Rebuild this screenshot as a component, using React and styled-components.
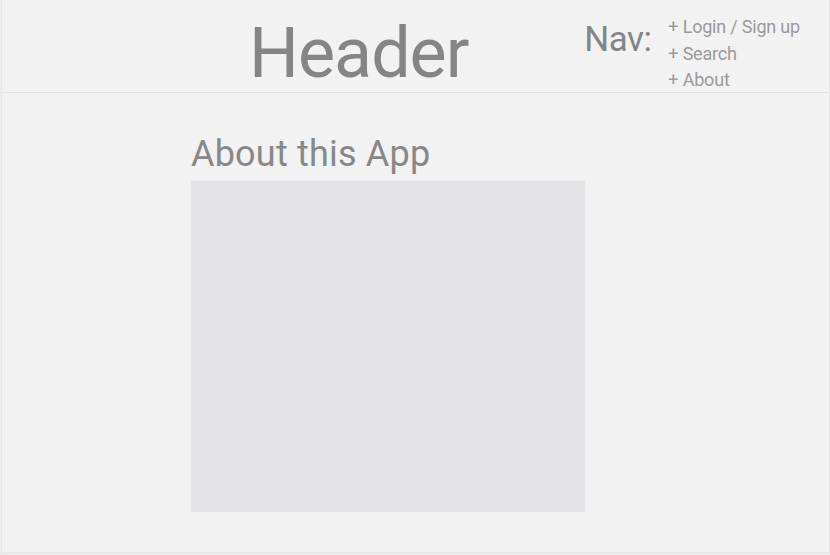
import React from "react";
import styled, { createGlobalStyle } from "styled-components";

const GlobalStyle = createGlobalStyle`
  html, body {
    margin: 0;
    padding: 0;
    background: #ececec;
  }
  body {
    font-family: Roboto, "Liberation Sans", sans-serif;
  }
`;

const Frame = styled.div`
  box-sizing: border-box;
  width: 829px;
  height: 553px;
  margin-left: 1px;
  background: #f2f2f2;
  border: 1px solid #e6e6e6;
  border-top: none;
`;

/* Header */
const TopBar = styled.header`
  box-sizing: border-box;
  height: 93px;
  display: flex;
  align-items: flex-start;
  border-bottom: 1px solid #e2e2e2;
`;

const Title = styled.h1`
  margin: 15px 0 0 247px;
  font-size: 70px;
  font-weight: 400;
  letter-spacing: -1px;
  line-height: 76px;
  color: #858585;
`;

const Nav = styled.nav`
  display: flex;
  align-items: flex-start;
  margin-left: auto;
  margin-right: 29px;
  padding-top: 14px;
`;

const NavLabel = styled.span`
  margin: 5px 17px 0 0;
  font-size: 35px;
  line-height: 42px;
  letter-spacing: -0.5px;
  color: #858585;
`;

const NavList = styled.ul`
  list-style: none;
  margin: 0;
  padding: 0;
`;

const NavItem = styled.li`
  font-size: 18px;
  line-height: 26.5px;
  letter-spacing: -0.2px;
  color: #9a9a9a;
`;

/* Content */
const Main = styled.main`
  padding: 34px 0 0 189px;
`;

const SectionTitle = styled.h2`
  margin: 0;
  font-size: 36px;
  font-weight: 400;
  line-height: 54px;
  letter-spacing: 0.2px;
  color: #888888;
`;

const Placeholder = styled.div`
  width: 394px;
  height: 331px;
  background: #e4e4e6;
`;

export default function App() {
  return (
    <>
      <GlobalStyle />
      <Frame>
        <TopBar>
          <Title>Header</Title>
          <Nav>
            <NavLabel>Nav:</NavLabel>
            <NavList>
              <NavItem>+ Login / Sign up</NavItem>
              <NavItem>+ Search</NavItem>
              <NavItem>+ About</NavItem>
            </NavList>
          </Nav>
        </TopBar>
        <Main>
          <SectionTitle>About this App</SectionTitle>
          <Placeholder />
        </Main>
      </Frame>
    </>
  );
}
